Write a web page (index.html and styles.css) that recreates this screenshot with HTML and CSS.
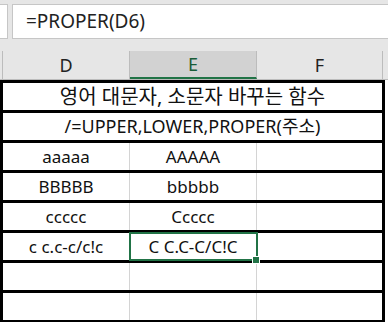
FILE: index.html
```html
<!DOCTYPE html>
<html lang="ko">
<head>
    <meta charset="UTF-8">
    <meta name="viewport" content="width=device-width, initial-scale=1.0">
    <title>PROPER</title>
    <link rel="stylesheet" href="styles.css">
</head>
<body>
    <div class="formula-bar">
        <div class="name-box"></div>
        <div class="formula">=PROPER(D6)</div>
    </div>

    <div class="col-headers">
        <div class="corner"></div>
        <div class="col-head">D</div>
        <div class="col-head selected">E</div>
        <div class="col-head">F</div>
    </div>

    <div class="sheet">
        <div class="row merged"><div class="cell title">영어 대문자, 소문자 바꾸는 함수</div></div>
        <div class="row merged"><div class="cell">/=UPPER,LOWER,PROPER(주소)</div></div>
        <div class="row">
            <div class="cell">aaaaa</div>
            <div class="cell">AAAAA</div>
            <div class="cell"></div>
        </div>
        <div class="row">
            <div class="cell">BBBBB</div>
            <div class="cell">bbbbb</div>
            <div class="cell"></div>
        </div>
        <div class="row">
            <div class="cell">ccccc</div>
            <div class="cell">Ccccc</div>
            <div class="cell"></div>
        </div>
        <div class="row">
            <div class="cell">c c.c-c/c!c</div>
            <div class="cell active">C C.C-C/C!C<span class="handle"></span></div>
            <div class="cell"></div>
        </div>
        <div class="row">
            <div class="cell"></div>
            <div class="cell"></div>
            <div class="cell"></div>
        </div>
        <div class="row">
            <div class="cell"></div>
            <div class="cell"></div>
            <div class="cell"></div>
        </div>
    </div>
</body>
</html>
```

FILE: styles.css
```css
body {
    margin: 0;
    background-color: #fff;
    font-family: "Noto Sans", "Noto Sans CJK KR", sans-serif;
    color: #111;
}
.formula-bar {
    display: flex;
    gap: 4px;
    height: 50px;
    padding-top: 4px;
    box-sizing: border-box;
    background-color: #e6e6e6;
}
.name-box {
    width: 7px;
    height: 33px;
    background-color: #fff;
    border: 1px solid #c6c6c6;
    border-left: none;
}
.formula {
    flex: 1;
    height: 33px;
    background-color: #fff;
    border: 1px solid #c6c6c6;
    border-right: none;
    padding-left: 13px;
    font-size: 19px;
    line-height: 33px;
    color: #222;
}
.col-headers {
    display: grid;
    grid-template-columns: 3px 127px 127px 126px 1fr;
    height: 30px;
    background-color: #e6e6e6;
    border-bottom: 1px solid #bcbcbc;
    box-sizing: border-box;
}
.corner {
    border-right: 1px solid #bcbcbc;
    margin-top: 1px;
}
.col-head {
    border-right: 1px solid #bcbcbc;
    margin-top: 1px;
    text-align: center;
    font-size: 18px;
    line-height: 28px;
    color: #222;
}
.col-head.selected {
    background-color: #d2d2d2;
    color: #185c37;
    border-bottom: 2px solid #217346;
    line-height: 26px;
}
.sheet {
    width: 379px;
    border: 3px solid #000;
    border-bottom: none;
}
.row {
    display: grid;
    grid-template-columns: 127px 127px 1fr;
    height: 27px;
    border-bottom: 3px solid #000;
}
.row.merged {
    grid-template-columns: 1fr;
}
.cell {
    position: relative;
    border-right: 1px solid #d4d4d4;
    text-align: center;
    font-size: 17px;
    line-height: 27px;
    white-space: nowrap;
}
.row.merged .cell {
    font-size: 18px;
}
.row.merged .cell.title {
    font-size: 20px;
}
.cell:last-child {
    border-right: none;
}
.cell.active {
    outline: 2px solid #217346;
    outline-offset: -1px;
}
.handle {
    position: absolute;
    right: -4px;
    bottom: -4px;
    width: 6px;
    height: 6px;
    background-color: #217346;
    border: 1px solid #fff;
    z-index: 1;
}
```
